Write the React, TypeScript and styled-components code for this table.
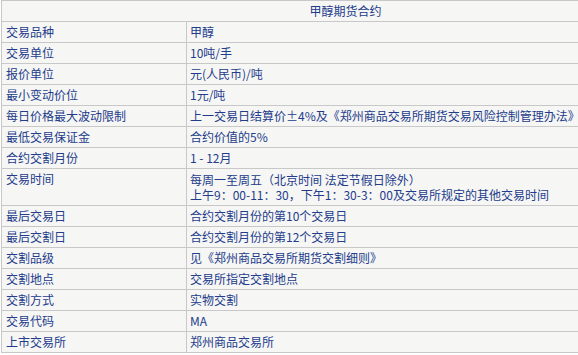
import React from "react";
import styled, { createGlobalStyle } from "styled-components";

const Global = createGlobalStyle`
  html, body { margin: 0; padding: 0; background: #ffffff; overflow: hidden; }
  body { font-family: "Noto Sans CJK SC", "Microsoft YaHei", sans-serif; }
`;

const Table = styled.table`
  margin: 0 0 0 1px;
  width: 689px;
  border-collapse: collapse;
  background: #f6f6f4;
  font-family: "Noto Sans CJK SC", sans-serif;
  font-size: 12px;
  color: #233c8c;
  table-layout: fixed;
`;

const HeadCell = styled.th`
  border: 1px solid #c8c8c8;
  padding: 3px 4px;
  line-height: 14px;
  font-weight: normal;
  text-align: center;
`;

const Cell = styled.td<{ $first?: boolean }>`
  border: 1px solid #c8c8c8;
  padding: 3px 4px 3px ${(p) => (p.$first ? "4px" : "3px")};
  line-height: 14px;
  vertical-align: top;
  white-space: nowrap;
  overflow: visible;
`;

const Line = styled.div`
  line-height: 15px;
`;

const rows: [string, React.ReactNode][] = [
  ["交易品种", "甲醇"],
  ["交易单位", "10吨/手"],
  ["报价单位", "元(人民币)/吨"],
  ["最小变动价位", "1元/吨"],
  ["每日价格最大波动限制", "上一交易日结算价±4%及《郑州商品交易所期货交易风险控制管理办法》相关规定"],
  ["最低交易保证金", "合约价值的5%"],
  ["合约交割月份", "1 - 12月"],
  [
    "交易时间",
    <>
      <Line>每周一至周五（北京时间 法定节假日除外）</Line>
      <Line>上午9：00-11：30，下午1：30-3：00及交易所规定的其他交易时间</Line>
    </>,
  ],
  ["最后交易日", "合约交割月份的第10个交易日"],
  ["最后交割日", "合约交割月份的第12个交易日"],
  ["交割品级", "见《郑州商品交易所期货交割细则》"],
  ["交割地点", "交易所指定交割地点"],
  ["交割方式", "实物交割"],
  ["交易代码", "MA"],
  ["上市交易所", "郑州商品交易所"],
];

export default function App() {
  return (
    <>
      <Global />
      <Table>
        <colgroup>
          <col style={{ width: 185 }} />
          <col />
        </colgroup>
        <thead>
          <tr>
            <HeadCell colSpan={2}>甲醇期货合约</HeadCell>
          </tr>
        </thead>
        <tbody>
          {rows.map(([k, v]) => (
            <tr key={k}>
              <Cell $first>{k}</Cell>
              <Cell>{v}</Cell>
            </tr>
          ))}
        </tbody>
      </Table>
    </>
  );
}
